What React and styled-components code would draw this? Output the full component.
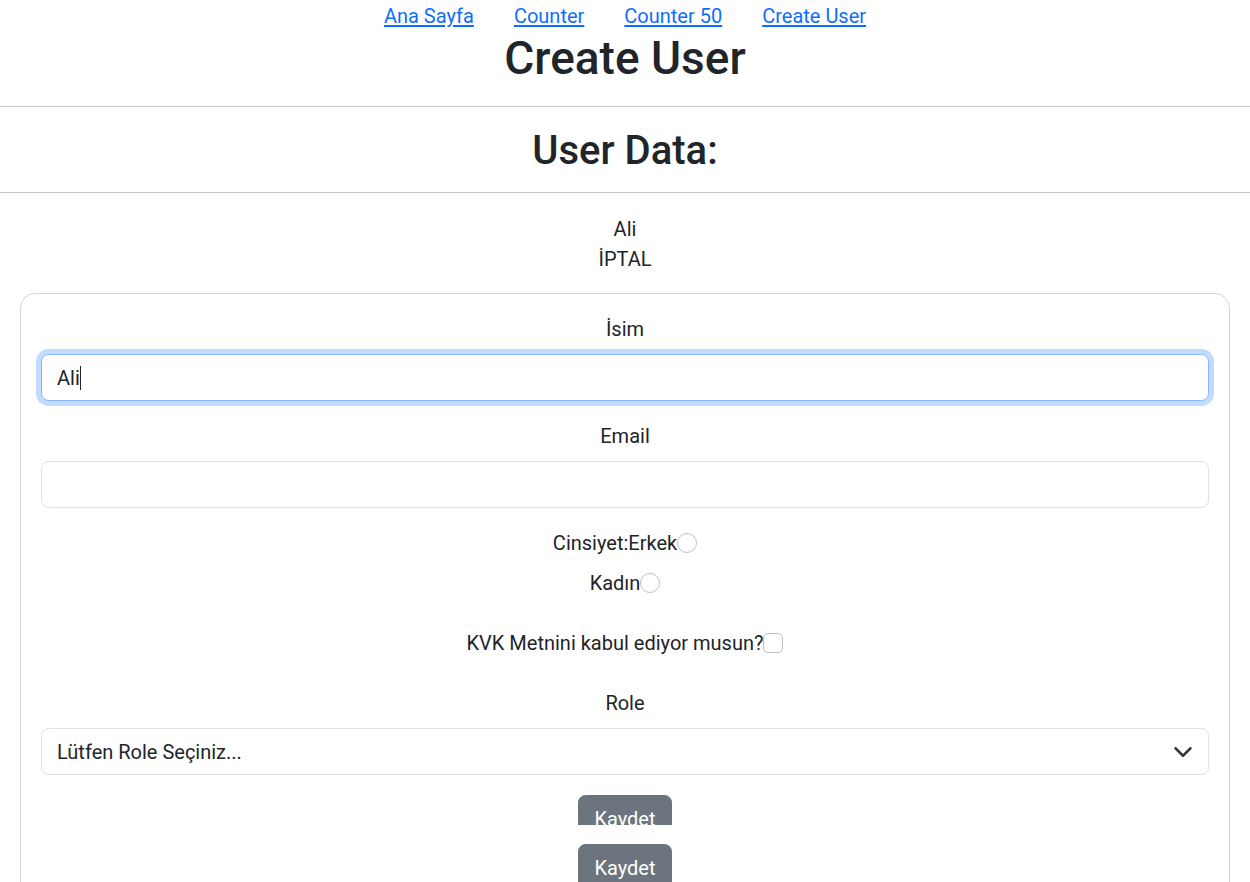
import React from 'react'
import styled, { createGlobalStyle } from 'styled-components'

const GlobalStyle = createGlobalStyle`
    body {
        margin: 0;
        font-family: Roboto, "Noto Sans", sans-serif;
        font-size: 20px;
        line-height: 30px;
        color: #212529;
        background: #fff;
    }
`;

const Nav = styled.nav`
    display: flex;
    justify-content: center;
    gap: 40px;
    height: 31px;
    line-height: 32px;
`;

const NavLink = styled.a`
    color: #0d6efd;
    text-decoration: underline;
    text-underline-offset: 2px;
`;

const Title = styled.h1`
    margin: 0 0 10px;
    text-align: center;
    font-size: 46px;
    font-weight: 500;
    line-height: 55px;
`;

const SubTitle = styled.h2`
    margin: 0 0 21px;
    padding-top: 4px;
    text-align: center;
    font-size: 40px;
    font-weight: 500;
    line-height: 40px;
`;

const Rule = styled.hr`
    margin: 20px 0;
    border: 0;
    border-top: 1px solid #c8c9ca;
`;

const DataLine = styled.div`
    text-align: center;
    line-height: 32px;
    height: 30px;
`;

const Card = styled.div`
    margin: 20px 20px 0 20px;
    padding: 20px 20px 40px;
    border: 1px solid #d3d4d5;
    border-radius: 15px;
    text-align: center;
`;

const Field = styled.div`
    margin-bottom: 20px;
`;

const Label = styled.label`
    display: block;
    margin-bottom: 10px;
`;

const InputWrap = styled.div`
    position: relative;
`;

const TextInput = styled.input`
    display: block;
    box-sizing: border-box;
    width: 100%;
    height: 47px;
    padding: 7px 15px;
    font: inherit;
    color: #212529;
    border: 1px solid ${p => (p.$focused ? '#86b7fe' : '#dee2e6')};
    border-radius: 7.5px;
    box-shadow: ${p => (p.$focused ? '0 0 0 5px rgba(13,110,253,.25)' : 'none')};
    outline: none;
    caret-color: transparent;
`;

const Caret = styled.span`
    position: absolute;
    left: 39px;
    top: 12px;
    width: 1px;
    height: 24px;
    background: #212529;
`;

const ChoiceLine = styled.div`
    display: flex;
    justify-content: center;
    align-items: center;
    margin-bottom: ${p => p.$gap}px;
`;

const Radio = styled.span`
    width: 20px;
    height: 20px;
    box-sizing: border-box;
    border: 1px solid #bfc1c3;
    border-radius: 50%;
    background: #fff;
`;

const Check = styled(Radio)`
    border-radius: 5px;
`;

const SelectBox = styled.div`
    display: flex;
    align-items: center;
    justify-content: space-between;
    box-sizing: border-box;
    height: 47px;
    padding: 7px 15px;
    border: 1px solid #dee2e6;
    border-radius: 7.5px;
    text-align: left;
`;

const Clip = styled.div`
    height: 30px;
    overflow: hidden;
    margin-top: 20px;
`;

const Button = styled.button`
    height: 47.5px;
    padding: 7.5px 15px;
    font: inherit;
    color: #fff;
    background: #6c757d;
    border: 1px solid #6c757d;
    border-radius: 7.5px;
`;

const SecondButton = styled.div`
    margin-top: 19px;
`;

const App = () => {
    return (
        <>
            <GlobalStyle />
            <Nav>
                <NavLink href="#">Ana Sayfa</NavLink>
                <NavLink href="#">Counter</NavLink>
                <NavLink href="#">Counter 50</NavLink>
                <NavLink href="#">Create User</NavLink>
            </Nav>
            <Title>Create User</Title>
            <Rule />
            <SubTitle>User Data:</SubTitle>
            <Rule />
            <DataLine>Ali</DataLine>
            <DataLine>İPTAL</DataLine>
            <Card>
                <Field>
                    <Label>İsim</Label>
                    <InputWrap>
                        <TextInput $focused defaultValue="Ali" />
                        <Caret />
                    </InputWrap>
                </Field>
                <Field>
                    <Label>Email</Label>
                    <TextInput />
                </Field>
                <ChoiceLine $gap={10}>Cinsiyet:Erkek<Radio /></ChoiceLine>
                <ChoiceLine $gap={30}>Kadın<Radio /></ChoiceLine>
                <ChoiceLine $gap={30}>KVK Metnini kabul ediyor musun?<Check /></ChoiceLine>
                <Label>Role</Label>
                <SelectBox>
                    Lütfen Role Seçiniz...
                    <svg width="20" height="20" viewBox="0 0 16 16">
                        <path d="m2 5 6 6 6-6" fill="none" stroke="#343a40" strokeWidth="2" strokeLinecap="round" strokeLinejoin="round" />
                    </svg>
                </SelectBox>
                <Clip>
                    <Button>Kaydet</Button>
                </Clip>
                <SecondButton>
                    <Button>Kaydet</Button>
                </SecondButton>
            </Card>
        </>
    )
}

export default App;
